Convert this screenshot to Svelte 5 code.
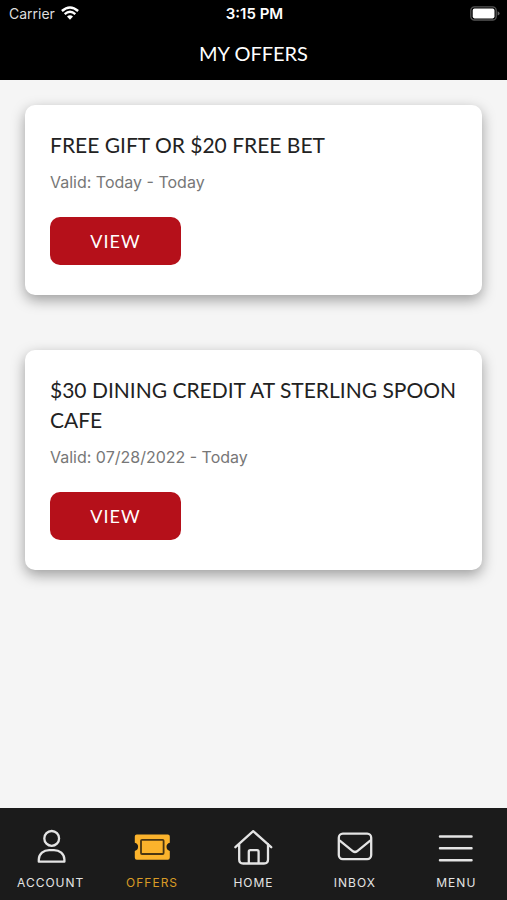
<script>
  const offers = [
    { title: 'FREE GIFT OR $20 FREE BET', valid: 'Valid: Today - Today' },
    { title: '$30 DINING CREDIT AT STERLING SPOON CAFE', valid: 'Valid: 07/28/2022 - Today' }
  ];
  const tabs = ['ACCOUNT', 'OFFERS', 'HOME', 'INBOX', 'MENU'];
  let active = $state('OFFERS');
</script>

<div class="app">
  <header>
    <div class="status">
      <div class="carrier">
        <span>Carrier</span>
        <svg width="18" height="14" viewBox="0 0 18 14" aria-hidden="true">
          <g fill="none" stroke="#fff" stroke-width="2.4">
            <path d="M.9 5Q9-2.2 17.1 5" />
            <path d="M3.7 8.1Q9 3.5 14.3 8.1" />
          </g>
          <path d="M6 10.6Q9 8.1 12 10.6L9 13.8z" fill="#fff" />
        </svg>
      </div>
      <time>3:15 PM</time>
      <div class="battery">
        <svg width="30" height="15" viewBox="0 0 30 15" aria-hidden="true">
          <rect x=".8" y=".8" width="25.4" height="13.2" rx="3.6" fill="none" stroke="#555" stroke-width="1.3" />
          <rect x="2.7" y="2.6" width="21.8" height="9.8" rx="1.8" fill="#fff" />
          <path d="M27.6 5.2q2 .7 2 2.2t-2 2.2z" fill="#666" />
        </svg>
      </div>
    </div>
    <h1>MY OFFERS</h1>
  </header>

  <main>
    {#each offers as offer}
      <article>
        <h2>{offer.title}</h2>
        <p>{offer.valid}</p>
        <button class="view" type="button">VIEW</button>
      </article>
    {/each}
  </main>

  <nav>
    {#each tabs as tab}
      <button type="button" class="tab" class:active={active === tab} onclick={() => (active = tab)}>
        <svg width="40" height="36" viewBox="0 0 40 36" fill="none" stroke="currentColor" stroke-width="2.3" stroke-linejoin="round" stroke-linecap="round" aria-hidden="true">
          {#if tab === 'ACCOUNT'}
            <circle cx="20.7" cy="9.4" r="7.4" />
            <path d="M7.8 32.7v-2.2c0-5.5 4.9-9.4 10.4-9.4h4.8c5.5 0 10.4 3.9 10.4 9.4v2.2z" />
          {:else if tab === 'OFFERS'}
            <path d="M4.8 5.500h31q2 0 2 2v6.200a4.200 4.200 0 0 0 0 8.200v6.600q0 2.200-2 2.200h-31q-2 0-2-2.200v-6.600a4.200 4.200 0 0 0 0-8.200V7.500q0-2 2-2z" fill="currentColor" stroke="none" />
            <rect x="9" y="10.800" width="22.600" height="14.200" rx="1" stroke="#493512" stroke-width="1.800" />
          {:else if tab === 'HOME'}
            <path d="M2.4 18.2 20.2 2.2l18 16M6.2 15v15.500q0 4 4 4h20.800q4 0 4-4V15M15.800 34V22.700q0-1.500 1.500-1.500h6.800q1.500 0 1.500 1.500V34" />
          {:else if tab === 'INBOX'}
            <rect x="3.8" y="4.700" width="32.400" height="25.400" rx="4" />
            <path d="M4.8 11.600 18 22.300q2 1.400 4 0L35.200 11.600" />
          {:else}
            <path d="M4 7.500h31.500M4 19.300h31.500M4 31.300h31.500" stroke-width="2.500" />
          {/if}
        </svg>
        <span>{tab}</span>
      </button>
    {/each}
  </nav>
</div>

<style>
  :global(body) {
    margin: 0;
    background: #f5f5f5;
  }

  .app {
    display: flex;
    flex-direction: column;
    min-height: 100vh;
    font-family: Inter, 'Liberation Sans', sans-serif;
    background: #f5f5f5;
  }

  header {
    box-sizing: border-box;
    height: 80px;
    color: #fff;
    background: #000;
  }

  .status {
    display: grid;
    grid-template-columns: 1fr auto 1fr;
    align-items: center;
    height: 26px;
    padding: 0 7px 0 9px;
    font-size: 14px;
  }

  .carrier {
    display: flex;
    align-items: center;
    gap: 6px;
    color: #ddd;
  }

  time {
    font-size: 15px;
    font-weight: 600;
  }

  .battery {
    display: flex;
    justify-content: flex-end;
  }

  h1,
  h2 {
    margin: 0;
    font-family: Lato, 'Open Sans', sans-serif;
    font-weight: 400;
    line-height: 30px;
  }

  h1 {
    padding-top: 12px;
    font-size: 20px;
    text-align: center;
  }

  h2 {
    color: #222;
    font-size: 21px;
  }

  main {
    display: flex;
    flex: 1;
    flex-direction: column;
    gap: 55px;
    padding: 25px;
  }

  article {
    padding: 25px 24px 30px 25px;
    border-radius: 10px;
    background: #fff;
    box-shadow: 0 5px 14px rgba(0, 0, 0, 0.36);
  }

  p {
    margin: 10px 0 22px;
    color: #777;
    font-size: 16px;
    line-height: 25px;
  }

  button {
    border: 0;
    cursor: pointer;
  }

  .view {
    display: block;
    width: 131px;
    height: 48px;
    padding: 0;
    border-radius: 10px;
    color: #fff;
    background: #b5101a;
    font-family: Lato, 'Open Sans', sans-serif;
    font-size: 18px;
    letter-spacing: 1px;
  }

  nav {
    display: grid;
    grid-template-columns: repeat(5, 1fr);
    box-sizing: border-box;
    height: 92px;
    background: #1b1b1b;
  }

  .tab {
    display: flex;
    flex-direction: column;
    align-items: center;
    gap: 10px;
    padding: 21px 0 0;
    color: #e4e4e4;
    background: none;
    font-family: inherit;
    font-size: 12px;
    line-height: 16px;
    letter-spacing: 1px;
  }

  .active {
    color: #fbb32c;
  }

  .active span {
    color: #d99b26;
  }
</style>
